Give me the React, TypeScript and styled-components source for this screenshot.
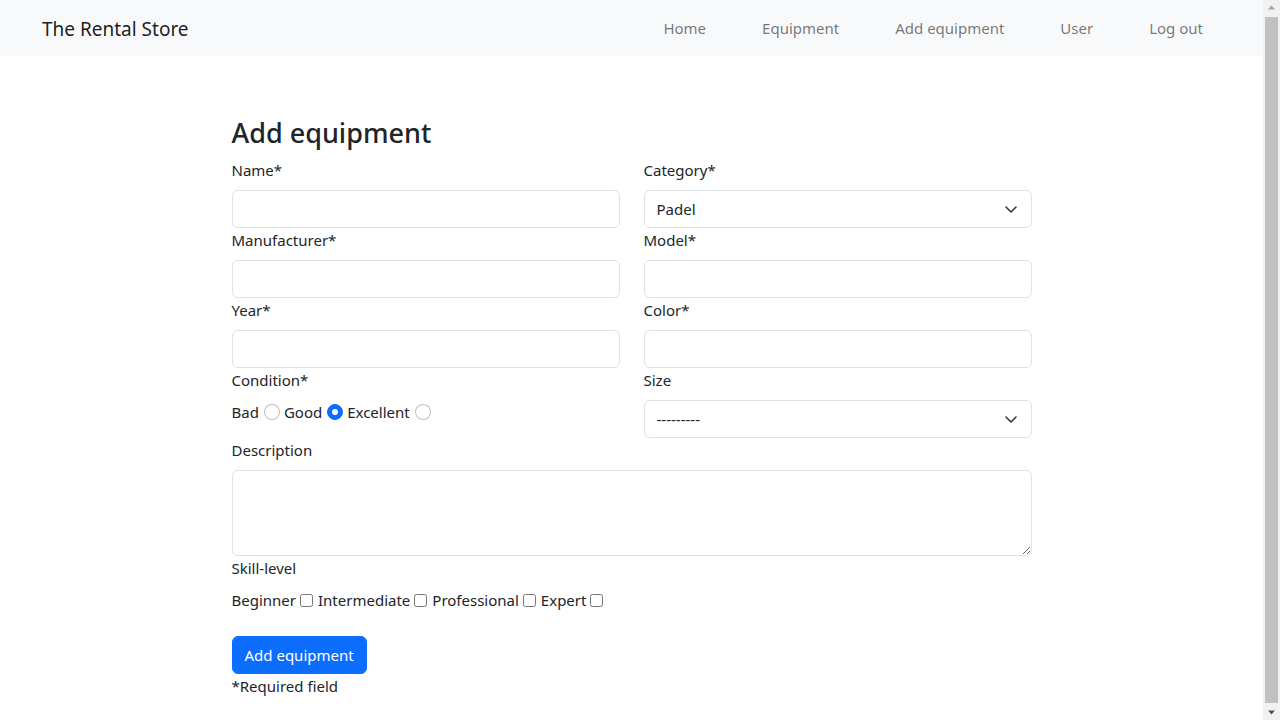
import React from "react";
import styled, { createGlobalStyle } from "styled-components";

const GlobalStyle = createGlobalStyle`
  body {
    margin: 0;
    font-family: "Noto Sans", "Open Sans", sans-serif;
    font-size: 15px;
    line-height: 24px;
    color: #212529;
    background: #fff;
  }
  * { box-sizing: border-box; }
`;

const Shell = styled.div`
  display: flex;
  align-items: flex-start;
`;

const Page = styled.div`
  flex: 1;
  min-width: 0;
`;

const ScrollTrack = styled.div`
  position: sticky;
  top: 0;
  width: 17px;
  height: 100vh;
  flex: none;
  background: #f1f1f1;
  display: flex;
  flex-direction: column;
  align-items: center;
`;

const ScrollArrow = styled.svg`
  width: 17px;
  height: 17px;
  flex: none;
`;

const ScrollThumb = styled.div`
  flex: 1;
  width: 13px;
  background: #c1c1c1;
`;

const Navbar = styled.nav`
  height: 56px;
  background: #f8f9fa;
  display: flex;
  align-items: center;
  justify-content: space-between;
  padding: 0 32px 0 42px;
`;

const Brand = styled.a`
  font-size: 19px;
  line-height: 30px;
  margin-top: 2px;
  color: rgba(0, 0, 0, 0.9);
  text-decoration: none;
`;

const NavList = styled.div`
  display: flex;
  align-items: center;
`;

const NavLink = styled.a`
  padding: 0 28px;
  color: rgba(0, 0, 0, 0.55);
  text-decoration: none;
  line-height: 24px;
`;

const Main = styled.main`
  width: 800px;
  margin: 0 auto;
  padding: 60px 0 36px;
`;

const Title = styled.h3`
  margin: 0 0 8px;
  font-size: 27px;
  font-weight: 500;
  line-height: 34px;
`;

const FormGrid = styled.form`
  display: grid;
  grid-template-columns: 1fr 1fr;
  column-gap: 24px;
  align-items: start;
`;

const Field = styled.div<{ $full?: boolean }>`
  display: flex;
  flex-direction: column;
  grid-column: ${(p) => (p.$full ? "1 / -1" : "auto")};
`;

const Label = styled.label`
  display: block;
  line-height: 24px;
  margin-bottom: 8px;
`;

const Input = styled.input`
  display: block;
  width: 100%;
  height: 38px;
  padding: 6px 12px;
  font: inherit;
  color: #212529;
  background: #fff;
  border: 1px solid #dee2e6;
  border-radius: 6px;
  outline: none;
`;

const TextArea = styled.textarea`
  display: block;
  width: 100%;
  height: 86px;
  padding: 6px 12px;
  font: inherit;
  color: #212529;
  background: #fff;
  border: 1px solid #dee2e6;
  border-radius: 6px;
  outline: none;
  resize: vertical;
`;

const SelectWrap = styled.div`
  position: relative;
`;

const Select = styled.select`
  display: block;
  width: 100%;
  height: 38px;
  padding: 6px 36px 6px 12px;
  font: inherit;
  color: #212529;
  background: #fff;
  border: 1px solid #dee2e6;
  border-radius: 6px;
  appearance: none;
  -webkit-appearance: none;
  outline: none;
`;

const Chevron = styled.svg`
  position: absolute;
  right: 15px;
  top: 16px;
  width: 12px;
  height: 7px;
  pointer-events: none;
`;

const ChoiceRow = styled.div`
  display: flex;
  align-items: center;
  height: 24px;
`;

const Radio = styled.input.attrs({ type: "radio" })`
  appearance: none;
  -webkit-appearance: none;
  width: 16px;
  height: 16px;
  margin: 0 4px 0 5px;
  border: 1px solid rgba(0, 0, 0, 0.25);
  border-radius: 50%;
  background: #fff;
  display: inline-grid;
  place-items: center;
  &:checked {
    background: #0d6efd;
    border-color: #0d6efd;
  }
  &:checked::after {
    content: "";
    width: 6px;
    height: 6px;
    border-radius: 50%;
    background: #fff;
  }
`;

const Check = styled.input.attrs({ type: "checkbox" })`
  width: 13px;
  height: 13px;
  margin: 0 5px 0 4px;
`;

const SubmitButton = styled.button`
  align-self: flex-start;
  margin-top: 24px;
  height: 38px;
  padding: 6px 12px;
  font: inherit;
  line-height: 24px;
  color: #fff;
  background: #0d6efd;
  border: 1px solid #0d6efd;
  border-radius: 6px;
  cursor: pointer;
`;

const Note = styled.div`
  line-height: 24px;
`;

const ChevronIcon = () => (
  <Chevron viewBox="0 0 12 7">
    <path
      d="M1 1l5 5 5-5"
      fill="none"
      stroke="#343a40"
      strokeWidth="1.6"
      strokeLinecap="round"
      strokeLinejoin="round"
    />
  </Chevron>
);

export default function App() {
  return (
    <>
      <GlobalStyle />
      <Shell>
        <Page>
          <Navbar>
            <Brand href="#">The Rental Store</Brand>
            <NavList>
              <NavLink href="#">Home</NavLink>
              <NavLink href="#">Equipment</NavLink>
              <NavLink href="#">Add equipment</NavLink>
              <NavLink href="#">User</NavLink>
              <NavLink href="#">Log out</NavLink>
            </NavList>
          </Navbar>
          <Main>
            <Title>Add equipment</Title>
            <FormGrid onSubmit={(e) => e.preventDefault()}>
              <Field>
                <Label>Name*</Label>
                <Input type="text" />
              </Field>
              <Field>
                <Label>Category*</Label>
                <SelectWrap>
                  <Select defaultValue="padel">
                    <option value="padel">Padel</option>
                    <option value="tennis">Tennis</option>
                  </Select>
                  <ChevronIcon />
                </SelectWrap>
              </Field>
              <Field>
                <Label>Manufacturer*</Label>
                <Input type="text" />
              </Field>
              <Field>
                <Label>Model*</Label>
                <Input type="text" />
              </Field>
              <Field>
                <Label>Year*</Label>
                <Input type="text" />
              </Field>
              <Field>
                <Label>Color*</Label>
                <Input type="text" />
              </Field>
              <Field>
                <Label>Condition*</Label>
                <ChoiceRow>
                  Bad
                  <Radio name="condition" />
                  Good
                  <Radio name="condition" defaultChecked />
                  Excellent
                  <Radio name="condition" />
                </ChoiceRow>
              </Field>
              <Field>
                <Label>Size</Label>
                <SelectWrap>
                  <Select defaultValue="">
                    <option value="">---------</option>
                  </Select>
                  <ChevronIcon />
                </SelectWrap>
              </Field>
              <Field $full>
                <Label>Description</Label>
                <TextArea />
              </Field>
              <Field $full>
                <Label>Skill-level</Label>
                <ChoiceRow>
                  Beginner
                  <Check />
                  Intermediate
                  <Check />
                  Professional
                  <Check />
                  Expert
                  <Check />
                </ChoiceRow>
                <SubmitButton type="submit">Add equipment</SubmitButton>
                <Note>*Required field</Note>
              </Field>
            </FormGrid>
          </Main>
        </Page>
        <ScrollTrack aria-hidden="true">
          <ScrollArrow viewBox="0 0 17 17">
            <path d="M8.5 5.5 L12 9.5 L5 9.5 Z" fill="#a3a3a3" />
          </ScrollArrow>
          <ScrollThumb />
          <ScrollArrow viewBox="0 0 17 17">
            <path d="M5 7.5 L12 7.5 L8.5 11.5 Z" fill="#505050" />
          </ScrollArrow>
        </ScrollTrack>
      </Shell>
    </>
  );
}
